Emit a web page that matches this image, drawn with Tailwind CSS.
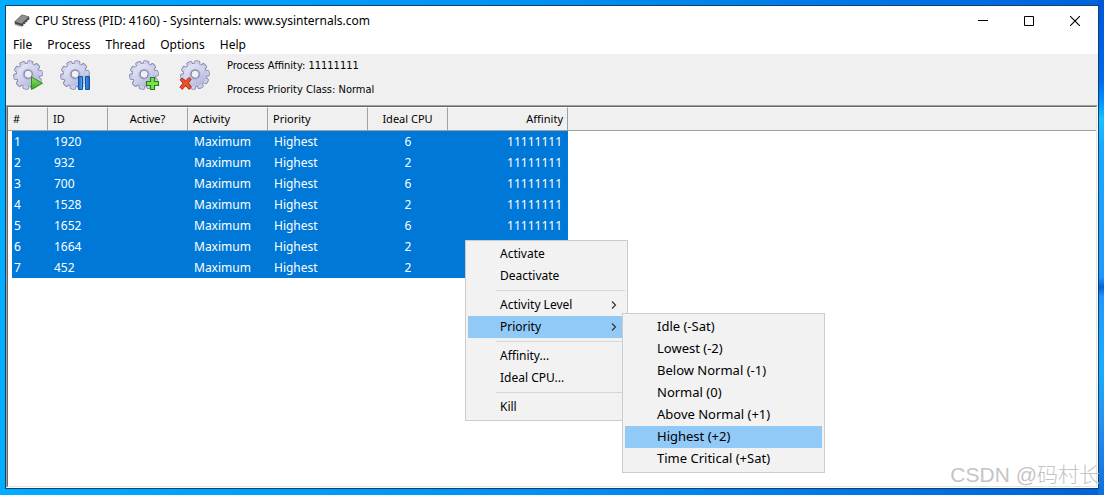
<!DOCTYPE html>
<html lang="en">
<head>
<meta charset="utf-8">
<title>CPU Stress</title>
<script src="https://cdn.jsdelivr.net/npm/@tailwindcss/browser@4"></script>
</head>
<body class="relative flex h-screen overflow-hidden bg-linear-to-r from-[#00adff] via-[#0090f4] to-[#0062dc] pt-[5px] pr-[5px] pb-[6px] pl-[5px] font-['Noto_Sans','Noto_Sans_CJK_SC',sans-serif] text-xs text-black">
<div class="absolute inset-y-0 right-0 w-[6px] bg-[linear-gradient(#0055d8_0%,#0068ea_16%,#008cff_20%,#18c0ff_24%,#18a8ff_30%,#2098ff_56%,#0060d8_58%,#2098ff_60%,#18acff_75%,#2890f0_85%,#0c6fe0_100%)]"></div>

<svg class="absolute size-0" aria-hidden="true">
  <defs>
    <linearGradient id="metal" x1="0" y1="0" x2="1" y2="1"><stop offset="0" stop-color="#e8eaf8"/><stop offset="0.5" stop-color="#cfd1ec"/><stop offset="1" stop-color="#a8acd4"/></linearGradient>
    <linearGradient id="blue" x1="0" y1="0" x2="1" y2="0"><stop offset="0" stop-color="#1766c8"/><stop offset="0.4" stop-color="#5cb8ff"/><stop offset="1" stop-color="#1560c4"/></linearGradient>
    <linearGradient id="green" x1="0" y1="0" x2="0" y2="1"><stop offset="0" stop-color="#8fe06c"/><stop offset="1" stop-color="#35ad1c"/></linearGradient>
    <g id="teeth">
      <rect id="tooth" x="12.6" y="1" width="4.8" height="28" rx="1.2"/>
      <use href="#tooth" transform="rotate(36 15 15)"/>
      <use href="#tooth" transform="rotate(72 15 15)"/>
      <use href="#tooth" transform="rotate(108 15 15)"/>
      <use href="#tooth" transform="rotate(144 15 15)"/>
      <circle cx="15" cy="15" r="11.2"/>
    </g>
    <g id="gear" transform="rotate(10 15 15)">
      <use href="#teeth" fill="#8083a8" stroke="#8083a8" stroke-width="1.6"/>
      <use href="#teeth" fill="#cdcfea"/>
      <circle cx="15" cy="15" r="11.2" fill="url(#metal)"/>
      <circle cx="15" cy="14.5" r="5.8" fill="#b8bbde"/>
      <circle cx="15" cy="14.2" r="4" fill="#f0f0f0" stroke="#7c7fa6" stroke-width="1.1"/>
    </g>
  </defs>
</svg>

<main class="relative flex min-w-0 flex-1 flex-col border border-[#16406c] bg-white">
  <header class="flex h-[30px] shrink-0 items-center pl-2">
    <svg class="mr-1 size-4" viewBox="0 0 16 16" aria-hidden="true">
      <path d="M.5 8.5 8 1.5 15 3.5 15.5 6 8 13.5 1 11.5Z" fill="#454545"/>
      <path d="M1 8.5 8.2 2 14.8 3.8 7.6 10.8Z" fill="#8f8f8f"/>
      <path d="M2.2 11v2M4.2 11.4v2M6.2 12v2M9.5 10.8v2M11.5 8.8v2M13.5 6.8v2" stroke="#b5b5b5"/>
    </svg>
    <h1 class="flex-1 pl-px leading-5">CPU Stress (PID: 4160) - Sysinternals: www.sysinternals.com</h1>
    <button aria-label="Minimize" class="flex h-full w-[46px] items-center justify-center"><svg class="size-[10px]" viewBox="0 0 10 10"><path d="M0 4.5h10" stroke="#000"/></svg></button>
    <button aria-label="Maximize" class="flex h-full w-[46px] items-center justify-center"><svg class="size-[10px]" viewBox="0 0 10 10"><path d="M.5.5h9v9h-9z" fill="none" stroke="#000"/></svg></button>
    <button aria-label="Close" class="flex h-full w-[46px] items-center justify-center"><svg class="size-[10px]" viewBox="0 0 10 10"><path d="M0 0l10 10M10 0L0 10" stroke="#000" stroke-width="1.1"/></svg></button>
  </header>
  <nav aria-label="Menu bar" class="flex h-[18px] shrink-0 items-center gap-[15px] pl-[7px] leading-[18px]">
    <button>File</button><button>Process</button><button>Thread</button><button>Options</button><button>Help</button>
  </nav>

  <section aria-label="Toolbar" class="flex h-[51px] shrink-0 bg-[#f0f0f0] pl-[7px]">
    <div class="flex items-start pt-[6px]">
      <button aria-label="Activate"><svg class="size-8" viewBox="0 0 32 32"><use href="#gear"/><path d="M18.5 17 29.5 23.2 18.5 29.5Z" fill="url(#green)" stroke="#2c8a1c" stroke-linejoin="round"/></svg></button>
      <button aria-label="Deactivate" class="ml-[15px]"><svg class="size-8" viewBox="0 0 32 32"><use href="#gear"/><path d="M18.5 16.5h4v13h-4zM25.5 16.5h4v13h-4z" fill="url(#blue)" stroke="#1252a8"/></svg></button>
      <button aria-label="Create thread" class="ml-[37px]"><svg class="size-8" viewBox="0 0 32 32"><use href="#gear"/><path d="M21.5 17.5h4v4h4v4h-4v4h-4v-4h-4v-4h4z" fill="#7be04c" stroke="#25831a" stroke-width="1.2"/></svg></button>
      <button aria-label="Kill thread" class="ml-[18px]"><svg class="size-8" viewBox="0 0 32 32"><use href="#gear" x="1"/><path d="M3 18 6.6 21 10 17.5 12.2 19.4 9.4 23 12.4 27 10 29.4 6.6 25.6 3.2 29.4 1 27.2 4 23.2 1.2 19.8Z" fill="#f05028" stroke="#b02410" stroke-linejoin="round"/></svg></button>
    </div>
    <div class="ml-4 font-['DejaVu_Sans_Condensed','DejaVu_Sans',sans-serif] text-[11px] leading-6">
      <p>Process Affinity: 11111111</p>
      <p>Process Priority Class: Normal</p>
    </div>
  </section>

  <section aria-label="Threads" class="min-h-0 flex-1 border-t border-r border-b border-l border-t-[#a0a0a0] border-r-white border-b-white border-l-[#a0a0a0]">
    <div class="h-full border border-t-[#696969] border-r-[#e3e3e3] border-b-[#e3e3e3] border-l-[#696969]">
      <table class="w-full table-fixed border-separate border-spacing-0 text-left">
        <colgroup><col class="w-[40px]"><col class="w-[60px]"><col class="w-[80px]"><col class="w-[80px]"><col class="w-[100px]"><col class="w-[80px]"><col class="w-[120px]"><col></colgroup>
        <thead>
          <tr class="h-6 bg-[#f0f0f0] text-[11px] *:border-t *:border-b *:border-t-white *:border-b-[#a0a0a0] *:p-0 *:font-normal">
            <th class="border-r border-r-[#a0a0a0]"><span class="pl-[5px]">#</span></th>
            <th class="border-r border-r-[#a0a0a0]"><span class="pl-[5px]">ID</span></th>
            <th class="border-r border-r-[#a0a0a0] text-center">Active?</th>
            <th class="border-r border-r-[#a0a0a0]"><span class="pl-[5px]">Activity</span></th>
            <th class="border-r border-r-[#a0a0a0]"><span class="pl-[5px]">Priority</span></th>
            <th class="border-r border-r-[#a0a0a0] text-center">Ideal CPU</th>
            <th class="border-r border-r-[#a0a0a0] text-right"><span class="pr-1">Affinity</span></th>
            <td></td>
          </tr>
        </thead>
        <tbody id="rows"></tbody>
      </table>
    </div>
  </section>
</main>

<menu class="absolute top-[240px] left-[465px] w-[163px] border border-[#ccc] bg-[#f2f2f2] p-[2px] leading-[22px]">
  <li><button class="block h-[22px] w-full pl-8 text-left">Activate</button></li>
  <li><button class="block h-[22px] w-full pl-8 text-left">Deactivate</button></li>
  <li role="separator" class="my-[3px] ml-7 h-px bg-[#d7d7d7]"></li>
  <li><button class="flex h-[22px] w-full items-center justify-between pr-2 pl-8">Activity Level<svg class="h-2 w-[6px]" viewBox="0 0 6 8"><path d="M1 .5 4.5 4 1 7.5" fill="none" stroke="#333" stroke-width="1.2"/></svg></button></li>
  <li><button class="flex h-[22px] w-full items-center justify-between bg-[#91c9f7] pr-2 pl-8">Priority<svg class="h-2 w-[6px]" viewBox="0 0 6 8"><path d="M1 .5 4.5 4 1 7.5" fill="none" stroke="#333" stroke-width="1.2"/></svg></button></li>
  <li role="separator" class="my-[3px] ml-7 h-px bg-[#d7d7d7]"></li>
  <li><button class="block h-[22px] w-full pl-8 text-left">Affinity...</button></li>
  <li><button class="block h-[22px] w-full pl-8 text-left">Ideal CPU...</button></li>
  <li role="separator" class="my-[3px] ml-7 h-px bg-[#d7d7d7]"></li>
  <li><button class="block h-[22px] w-full pl-8 text-left">Kill</button></li>
</menu>

<menu class="absolute top-[313px] left-[622px] w-[203px] border border-[#ccc] bg-[#f2f2f2] p-[2px] text-[13px] leading-[20px]">
  <li><button class="block h-[22px] w-full pb-[2px] pl-8 text-left">Idle (-Sat)</button></li>
  <li><button class="block h-[22px] w-full pb-[2px] pl-8 text-left">Lowest (-2)</button></li>
  <li><button class="block h-[22px] w-full pb-[2px] pl-8 text-left">Below Normal (-1)</button></li>
  <li><button class="block h-[22px] w-full pb-[2px] pl-8 text-left">Normal (0)</button></li>
  <li><button class="block h-[22px] w-full pb-[2px] pl-8 text-left">Above Normal (+1)</button></li>
  <li><button class="block h-[22px] w-full bg-[#91c9f7] pb-[2px] pl-8 text-left">Highest (+2)</button></li>
  <li><button class="block h-[22px] w-full pb-[2px] pl-8 text-left">Time Critical (+Sat)</button></li>
</menu>

<p class="absolute right-1 bottom-1 font-['Liberation_Sans','Noto_Sans_CJK_SC',sans-serif] text-[21px] leading-8 font-light whitespace-nowrap text-[#c4c4c4]">CSDN @码村长</p>

<script>
const mask = '11111111';
const threads = [[1920, 6, mask], [932, 2, mask], [700, 6, mask], [1528, 2, mask], [1652, 6, mask], [1664, 2, ''], [452, 2, '']];
document.getElementById('rows').innerHTML = threads.map(([id, cpu, affinity], i) => `
  <tr class="h-[21px] text-white *:p-0 *:leading-[21px]">
    <td class="border-l-4 border-white bg-[#0078d7]"><span class="pl-[2px]">${i + 1}</span></td>
    <td class="bg-[#0078d7]"><span class="pl-[6px]">${id}</span></td>
    <td class="bg-[#0078d7]"></td>
    <td class="bg-[#0078d7]"><span class="pl-[6px]">Maximum</span></td>
    <td class="bg-[#0078d7]"><span class="pl-[6px]">Highest</span></td>
    <td class="bg-[#0078d7] text-center">${cpu}</td>
    <td class="bg-[#0078d7] text-right"><span class="pr-[6px]">${affinity}</span></td>
    <td></td>
  </tr>`).join('');
</script>
</body>
</html>
